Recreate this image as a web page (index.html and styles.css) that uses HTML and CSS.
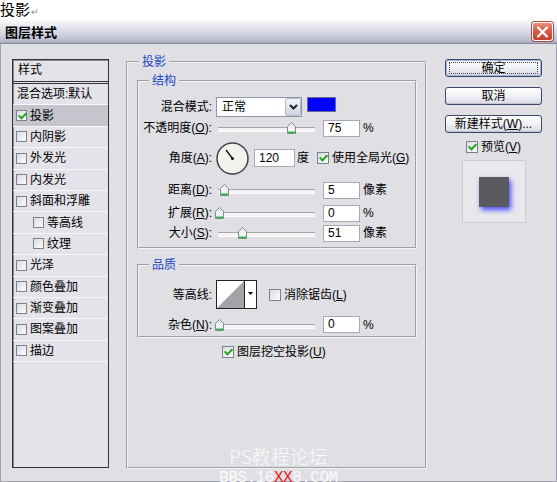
FILE: index.html
```html
<!DOCTYPE html>
<html lang="zh-CN">
<head>
<meta charset="utf-8">
<title>图层样式</title>
<link rel="stylesheet" href="styles.css">
</head>
<body>
<div class="caption">投影<span class="ret">↵</span></div>
<div class="dialog">
  <div class="titlebar">
    <span class="title">图层样式</span>
    <span class="close"><svg width="13" height="12" viewBox="0 0 13 12"><path d="M2 1.5L11 10.5M11 1.5L2 10.5" stroke="#fff" stroke-width="2.2" stroke-linecap="round"/></svg></span>
  </div>
  <div class="dbody">
    <div class="stylelist">
      <div class="list-head">样式</div>
      <div class="li plain">混合选项:默认</div>
      <div class="li sel"><span class="cb on"></span>投影</div>
      <div class="li"><span class="cb"></span>内阴影</div>
      <div class="li"><span class="cb"></span>外发光</div>
      <div class="li"><span class="cb"></span>内发光</div>
      <div class="li"><span class="cb"></span>斜面和浮雕</div>
      <div class="li sub"><span class="cb"></span>等高线</div>
      <div class="li sub"><span class="cb"></span>纹理</div>
      <div class="li"><span class="cb"></span>光泽</div>
      <div class="li"><span class="cb"></span>颜色叠加</div>
      <div class="li"><span class="cb"></span>渐变叠加</div>
      <div class="li"><span class="cb"></span>图案叠加</div>
      <div class="li"><span class="cb"></span>描边</div>
    </div>

    <fieldset class="grp main">
      <legend>投影</legend>
      <fieldset class="grp sub struct">
        <legend>结构</legend>
        <div class="row r-blend">
          <span class="lbl">混合模式:</span>
          <div class="select"><span class="sel-text">正常</span><span class="sel-btn"><svg width="9" height="6" viewBox="0 0 9 6"><path d="M1 1L4.5 4.5L8 1" fill="none" stroke="#222" stroke-width="2"/></svg></span></div>
          <span class="swatch"></span>
        </div>
        <div class="row r-opacity">
          <span class="lbl">不透明度(<u>O</u>):</span>
          <div class="slider"><span class="thumb" style="left:73px"><svg width="9" height="12" viewBox="0 0 9 12"><path d="M0.5 11.5V4.5L4.5 0.5L8.5 4.5V11.5Z" fill="#f2f2ee" stroke="#7d8a94"/><path d="M1 10.5H8" stroke="#3bb24a" stroke-width="2"/></svg></span></div>
          <span class="field">75</span>
          <span class="unit">%</span>
        </div>
        <div class="row r-angle">
          <span class="lbl">角度(<u>A</u>):</span>
          <span class="dial"><svg width="33" height="33" viewBox="0 0 33 33"><circle cx="16.5" cy="16.5" r="15.5" fill="#f3f3ee" stroke="#3c4352" stroke-width="1.5"/><path d="M16.5 16.5L10 8" stroke="#111" stroke-width="1.3"/><circle cx="16.5" cy="16.5" r="1.5" fill="#111"/></svg></span>
          <span class="field wide">120</span>
          <span class="unit">度</span>
          <span class="check"><span class="cb on"></span>使用全局光(<u>G</u>)</span>
        </div>
        <div class="row r-dist">
          <span class="lbl">距离(<u>D</u>):</span>
          <div class="slider"><span class="thumb" style="left:6px"><svg width="9" height="12" viewBox="0 0 9 12"><path d="M0.5 11.5V4.5L4.5 0.5L8.5 4.5V11.5Z" fill="#f2f2ee" stroke="#7d8a94"/><path d="M1 10.5H8" stroke="#3bb24a" stroke-width="2"/></svg></span></div>
          <span class="field">5</span>
          <span class="unit">像素</span>
        </div>
        <div class="row r-spread">
          <span class="lbl">扩展(<u>R</u>):</span>
          <div class="slider"><span class="thumb" style="left:1px"><svg width="9" height="12" viewBox="0 0 9 12"><path d="M0.5 11.5V4.5L4.5 0.5L8.5 4.5V11.5Z" fill="#f2f2ee" stroke="#7d8a94"/><path d="M1 10.5H8" stroke="#3bb24a" stroke-width="2"/></svg></span></div>
          <span class="field">0</span>
          <span class="unit">%</span>
        </div>
        <div class="row r-size">
          <span class="lbl">大小(<u>S</u>):</span>
          <div class="slider"><span class="thumb" style="left:24px"><svg width="9" height="12" viewBox="0 0 9 12"><path d="M0.5 11.5V4.5L4.5 0.5L8.5 4.5V11.5Z" fill="#f2f2ee" stroke="#7d8a94"/><path d="M1 10.5H8" stroke="#3bb24a" stroke-width="2"/></svg></span></div>
          <span class="field">51</span>
          <span class="unit">像素</span>
        </div>
      </fieldset>

      <fieldset class="grp sub quality">
        <legend>品质</legend>
        <div class="row r-contour">
          <span class="lbl">等高线:</span>
          <span class="contour"><svg width="41" height="29" viewBox="0 0 41 29"><rect x="0.5" y="0.5" width="40" height="28" fill="#fff" stroke="#222"/><polygon points="28,1 28,28 1,28" fill="#a3a3a8"/><line x1="28.5" y1="0" x2="28.5" y2="29" stroke="#222"/><polygon points="32,12 37,12 34.5,15" fill="#000"/></svg></span>
          <span class="check"><span class="cb"></span>消除锯齿(<u>L</u>)</span>
        </div>
        <div class="row r-noise">
          <span class="lbl">杂色(<u>N</u>):</span>
          <div class="slider"><span class="thumb" style="left:1px"><svg width="9" height="12" viewBox="0 0 9 12"><path d="M0.5 11.5V4.5L4.5 0.5L8.5 4.5V11.5Z" fill="#f2f2ee" stroke="#7d8a94"/><path d="M1 10.5H8" stroke="#3bb24a" stroke-width="2"/></svg></span></div>
          <span class="field">0</span>
          <span class="unit">%</span>
        </div>
      </fieldset>

      <div class="check knock"><span class="cb on"></span>图层挖空投影(<u>U</u>)</div>
    </fieldset>

    <div class="side">
      <div class="btn def">确定</div>
      <div class="btn">取消</div>
      <div class="btn new">新建样式(<u>W</u>)...</div>
      <div class="check pv-check"><span class="cb on"></span>预览(<u>V</u>)</div>
      <div class="preview"><div class="pv-sq"></div></div>
    </div>
  </div>
</div>
<div class="watermark">
  <div class="wm1">PS教程论坛</div>
  <div class="wm2">BBS.16<b>XX</b>8.COM</div>
</div>
</body>
</html>
```
FILE: styles.css
```css
* { box-sizing: border-box; }
html, body { margin: 0; padding: 0; }
body {
  width: 557px; height: 482px; overflow: hidden; position: relative;
  background: #fff; color: #000;
  font: 12px/14px "Liberation Sans", "Noto Sans CJK SC", sans-serif;
}
u { text-decoration: underline; text-underline-offset: 1px; }

.caption { height: 20px; font: 15px/18px "Noto Sans CJK SC", sans-serif; }
.ret { font-size: 9px; color: #888; margin-left: 1px; }

.dialog { width: 557px; }
.titlebar {
  height: 24px; display: flex; align-items: center; justify-content: space-between;
  padding: 0 4px 0 5px;
  background: linear-gradient(#fafafd 0%, #e6e7ef 30%, #cfd1de 65%, #b9bbcd 90%, #a2a4b8 100%);
  border-bottom: 1px solid #8a8ca0;
}
.title { font: bold 13px/16px "Noto Sans CJK SC", sans-serif; }
.close {
  width: 21px; height: 19px; border: 1px solid #fff; border-radius: 3px;
  background: linear-gradient(#ea8e7f, #d95b47 45%, #c4402e);
  box-shadow: 0 0 0 1px #b04a3c;
  display: flex; align-items: center; justify-content: center;
}

.dbody {
  height: 438px; background: #dfdfe4;
  border: 1px solid #a0a0ae; border-top: 0;
  display: flex; align-items: flex-start; padding: 11px 0 0 11px;
}

/* style list */
.stylelist {
  flex: none; width: 97px; height: 409px; margin-top: 4px;
  border: 1px solid #333; box-shadow: inset 1px 1px 0 #8c8c8c;
  background: #e4e3e9;
}
.list-head { height: 24px; line-height: 21px; padding-left: 5px; border-bottom: 3px double #333; }
.li {
  height: 21.4px; display: flex; align-items: center; padding-left: 3px;
  border-bottom: 1px solid #f7f7f9; white-space: nowrap;
}
.li.plain { padding-left: 4px; }
.li.sub { padding-left: 20px; }
.li.sel { background: #c6c5cd; }
.li .cb { width: 11px; height: 11px; margin-right: 3px; }

/* group boxes */
.grp { margin: 0; padding: 0; min-width: 0; border: 2px groove #f4f4f8; }
.grp > legend { padding: 0 3px; line-height: 14px; color: #1f47c5; }
.main { flex: none; width: 301px; height: 414px; margin-left: 17px; padding: 5px 8px 0 9px; }
.main > legend { margin-left: 2px; }
.sub > legend { margin-left: 10px; }
.struct { padding: 9px 0 5px 0; }
.quality { margin-top: 9px; padding: 8px 0 3px 0; }

.row { display: flex; align-items: center; }
.r-blend { height: 20px; }
.r-opacity { height: 20px; margin-top: 1px; }
.r-angle { height: 32px; margin-top: 4px; }
.r-dist { height: 18px; margin-top: 7px; }
.r-spread { height: 18px; margin-top: 5px; }
.r-size { height: 18px; margin-top: 2px; }
.r-contour { height: 29px; }
.r-noise { height: 17px; margin-top: 7px; }

.lbl { flex: none; width: 73px; margin-right: 2px; text-align: right; white-space: nowrap; }

.select { flex: none; margin-left: 2px; width: 86px; height: 20px; display: flex; background: #fff; border: 1px solid #8e97a8; }
.sel-text { flex: 1; padding-left: 5px; line-height: 18px; }
.sel-btn {
  width: 16px; height: 18px; display: flex; align-items: center; justify-content: center;
  background: linear-gradient(#f4f5fa, #d2d4e0); border: 1px solid #b6bacb; border-radius: 2px;
}
.swatch { flex: none; align-self: flex-start; margin-left: 5px; width: 29px; height: 15px; background: #0000ff; border: 1px solid #6a6a8a; }

.slider { flex: none; position: relative; width: 104px; height: 12px; }
.slider::before {
  content: ""; position: absolute; left: 4px; right: 3px; top: 5px; height: 3px;
  border-top: 1px solid #a4a4aa; border-bottom: 1px solid #fff; background: #f4f4f4;
}
.thumb { position: absolute; top: 0; width: 9px; height: 12px; display: block; }
.thumb svg { display: block; }

.field {
  flex: none; margin-left: 5px; width: 37px; height: 17px; background: #fff;
  border: 1px solid #a8a8b4; padding-left: 4px; line-height: 15px;
}
.field.wide { width: 41px; height: 18px; line-height: 16px; }
.unit { margin-left: 3px; white-space: nowrap; }
.r-angle .unit { margin-left: 2px; }
.dial { flex: none; margin-left: 2px; width: 33px; height: 33px; }
.dial svg { display: block; }

.check { display: flex; align-items: center; white-space: nowrap; }
.r-angle .check { margin-left: 8px; }
.r-contour .check { margin-left: 12px; }
.contour { flex: none; margin-left: 2px; width: 41px; height: 29px; }
.contour svg { display: block; }
.knock { height: 14px; margin-top: 7px; padding-left: 85px; }

.cb {
  position: relative; display: inline-block; flex: none; width: 12px; height: 12px;
  border: 1px solid #7a8292; background: linear-gradient(135deg, #dcdde1, #fbfbfb);
  margin-right: 3px;
}
.cb.on::after {
  content: ""; position: absolute; left: 3px; top: 0; width: 3px; height: 6px;
  border: solid #21a121; border-width: 0 2px 2px 0; transform: rotate(45deg);
}

/* right column */
.side { flex: none; width: 97px; margin: 4px 0 0 18px; display: flex; flex-direction: column; align-items: center; }
.btn {
  width: 97px; height: 18px; margin-bottom: 10px;
  border: 1px solid #3b4a6b; border-radius: 3px;
  background: linear-gradient(#ffffff, #f0f0f5 50%, #d8d9e3);
  box-shadow: inset 0 -1px 0 #c2c4d2;
  display: flex; align-items: center; justify-content: center; white-space: nowrap;
}
.btn.def { position: relative; box-shadow: inset 0 0 0 1px #a7b4dc; }
.btn.def::after { content: ""; position: absolute; inset: 2px 3px; border: 1px dotted #444; }
.btn.new { margin-bottom: 7px; }
.pv-check { height: 14px; }
.preview {
  margin-top: 6px; width: 64px; height: 63px; background: #e8e8ec; border: 1px solid #cbcbd2;
  display: flex; align-items: center; justify-content: center;
}
.pv-sq { width: 30px; height: 30px; background: #5a5a60; box-shadow: 2px 3px 5px rgba(60, 60, 255, .9); }

/* watermark overlay */
.watermark { position: absolute; left: 0; top: 445px; width: 557px; text-align: center; color: rgba(255, 255, 255, .85); }
.wm1 { font: 300 19px/22px "Noto Sans CJK SC", sans-serif; }
.wm2 { font: 16px/16px "Liberation Mono", monospace; letter-spacing: -0.5px; margin-top: 3px; }
.wm2 b { color: #e02020; font-weight: normal; }
```
